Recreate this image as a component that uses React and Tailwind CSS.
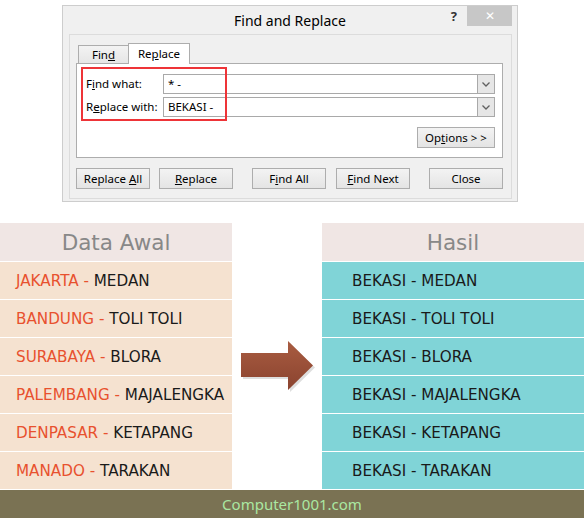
import React from "react";

const rows = [
  ["JAKARTA", "MEDAN"],
  ["BANDUNG", "TOLI TOLI"],
  ["SURABAYA", "BLORA"],
  ["PALEMBANG", "MAJALENGKA"],
  ["DENPASAR", "KETAPANG"],
  ["MANADO", "TARAKAN"],
];

const ui = { fontFamily: '"Noto Sans", "Open Sans", sans-serif' };
const verdana = { fontFamily: '"DejaVu Sans", Verdana, sans-serif' };

function Btn({ children, className = "" }) {
  return (
    <div
      className={
        "flex h-[21px] w-[74px] items-center justify-center border border-[#adadad] bg-linear-to-b from-[#f3f3f3] to-[#e4e4e4] text-[11.5px] text-black " +
        className
      }
    >
      <span>{children}</span>
    </div>
  );
}

function Combo({ value }) {
  return (
    <div className="flex h-[20px] flex-1 items-center border border-[#a9a9a9] bg-white">
      <span className="flex-1 pl-[4px] text-[11.5px] text-black">{value}</span>
      <div className="flex h-[18px] w-[17px] items-center justify-center border-l border-[#a9a9a9] bg-[#e6e6e6]">
        <svg width="8" height="5" viewBox="0 0 8 5">
          <path d="M0.5 0.5 L4 4 L7.5 0.5" fill="none" stroke="#606060" strokeWidth="1.3" />
        </svg>
      </div>
    </div>
  );
}

function Arrow() {
  return (
    <svg width="78" height="54" viewBox="0 0 78 54">
      <defs>
        <linearGradient id="ag" x1="0" y1="0" x2="0" y2="1">
          <stop offset="0" stopColor="#a95c41" />
          <stop offset="1" stopColor="#8a432f" />
        </linearGradient>
      </defs>
      <polygon
        points="2,14 49,14 49,2 74,26.5 49,51 49,38 2,38"
        fill="#c8c8c8"
        opacity="0.6"
      />
      <polygon points="0,12 47,12 47,0 72,24.5 47,49 47,36 0,36" fill="url(#ag)" />
    </svg>
  );
}

export default function App() {
  return (
    <div className="relative h-[518px] w-[584px] overflow-hidden bg-white">
      {/* dialog */}
      <div
        className="relative ml-[62px] mt-[5px] mb-[21px] flex h-[197px] w-[456px] flex-col border border-[#cdcdcd] bg-[#f0f0f0]"
        style={ui}
      >
        <div className="flex h-[28px] items-center justify-center text-[14px] text-black">
          Find and Replace
        </div>
        <div className="absolute right-[60px] top-[1px] text-[13px] font-bold text-[#333]">?</div>
        <div className="absolute right-[5px] top-0 flex h-[20px] w-[45px] items-center justify-center bg-[#c7c7c7] text-[12px] text-white">
          ✕
        </div>

        <div className="ml-[6px] mr-[5px] border border-[#dcdcdc] pb-[9px] pl-[6px] pt-[8px]">
          {/* tabs */}
          <div className="relative z-10 -mb-px ml-[2px] flex h-[21px] items-end">
            <div className="mb-px flex h-[18px] w-[50px] items-center justify-center border-l border-t border-[#adadad] bg-linear-to-b from-[#f3f3f3] to-[#e6e6e6] text-[11.5px] text-black">
              <span>
                Fin<u>d</u>
              </span>
            </div>
            <div className="flex h-[21px] w-[62px] items-start justify-center border-x border-t border-[#adadad] bg-white pt-[1px] text-[11.5px] text-black">
              <span>
                Re<u>p</u>lace
              </span>
            </div>
          </div>

          {/* panel */}
          <div className="relative flex h-[95px] w-[427px] flex-col border border-[#adadad] bg-white pl-[9px] pr-[7px] pt-[10px]">
            <div className="flex flex-col gap-[3px]">
              <div className="flex items-center">
                <span className="w-[77px] text-[11.5px] text-black">
                  F<u>i</u>nd what:
                </span>
                <Combo value="* -" />
              </div>
              <div className="flex items-center">
                <span className="w-[77px] text-[11.5px] text-black">
                  R<u>e</u>place with:
                </span>
                <Combo value="BEKASI -" />
              </div>
            </div>
            <div className="mt-[10px] flex justify-end">
              <Btn className="w-[78px]">
                Op<u>t</u>ions &gt; &gt;
              </Btn>
            </div>
            <div className="absolute left-[4px] top-[3px] z-10 h-[54px] w-[146px] border-2 border-[#ee3438]" />
          </div>

          {/* buttons */}
          <div className="mt-[10px] flex">
            <Btn>
              Replace <u>A</u>ll
            </Btn>
            <Btn className="ml-[9px] border-[#3c8fe0] from-[#eef4fb] to-[#e3ebf4]">
              <u>R</u>eplace
            </Btn>
            <Btn className="ml-[19px]">
              F<u>i</u>nd All
            </Btn>
            <Btn className="ml-[10px]">
              <u>F</u>ind Next
            </Btn>
            <Btn className="ml-[19px]">Close</Btn>
          </div>
        </div>
      </div>

      {/* data */}
      <div className="flex" style={verdana}>
        <div className="flex w-[232px] flex-col gap-[1px]">
          <div className="flex h-[38px] items-center justify-center bg-[#f0e6e4] pt-[2px] text-[21.5px] text-[#888888]">
            Data Awal
          </div>
          {rows.map(([a, b]) => (
            <div key={a} className="flex h-[37px] items-center whitespace-nowrap bg-[#f5e2d0] pl-[16px] pt-[2px] text-[15.2px]">
              <span className="text-[#e8512e]">{a} -&nbsp;</span>
              <span className="text-[#1a1a1a]">{b}</span>
            </div>
          ))}
        </div>

        <div className="flex w-[90px] items-start pl-[9px] pt-[118px]">
          <Arrow />
        </div>

        <div className="flex w-[262px] flex-col gap-[1px]">
          <div className="flex h-[38px] items-center justify-center bg-[#f0e6e4] pt-[2px] text-[21.5px] text-[#888888]">
            Hasil
          </div>
          {rows.map(([a, b]) => (
            <div key={a} className="flex h-[37px] items-center bg-[#80d4d7] pl-[30px] pt-[2px] text-[15.2px] text-[#1a1a1a]">
              BEKASI - {b}
            </div>
          ))}
        </div>
      </div>

      <div
        className="mt-[1px] flex h-[28px] items-center justify-center bg-[#7a7253] text-[15px] text-[#aae8a2]"
        style={ui}
      >
        Computer1001.com
      </div>
    </div>
  );
}
